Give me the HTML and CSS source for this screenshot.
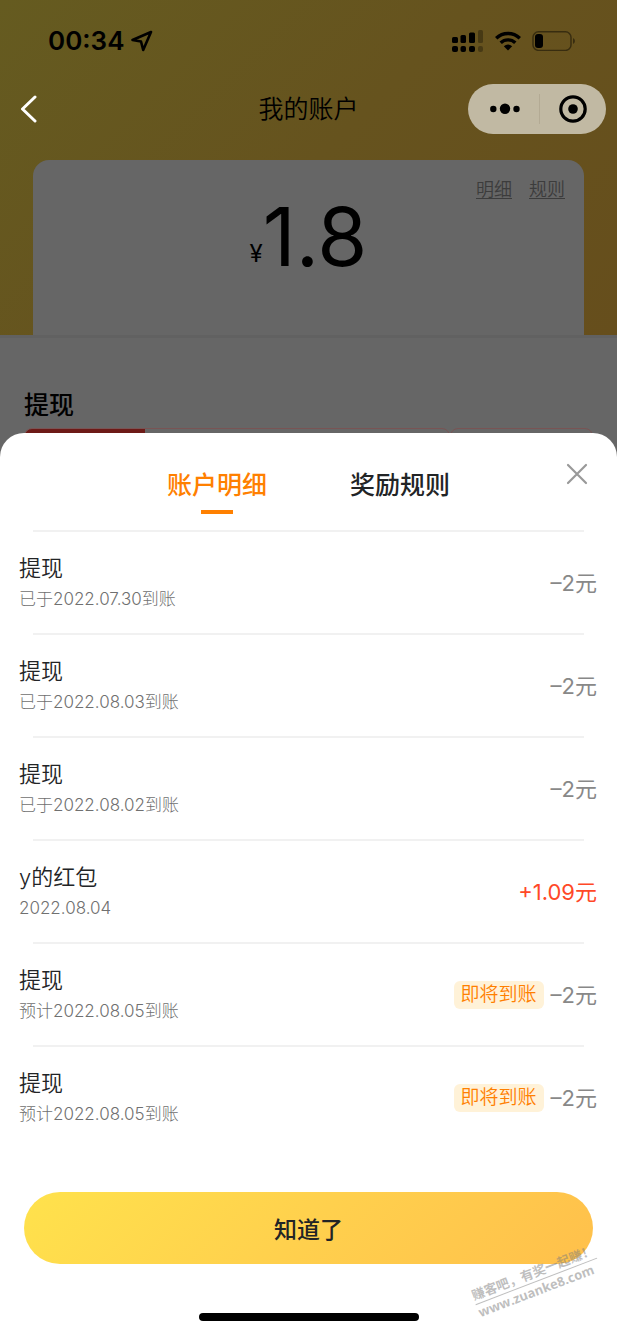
FILE: index.html
```html
<!DOCTYPE html>
<html lang="zh-CN">
<head>
<meta charset="utf-8">
<meta name="viewport" content="width=device-width, initial-scale=1">
<title>我的账户</title>
<link rel="stylesheet" href="styles.css">
</head>
<body>
<div class="page">
  <div class="account">
    <header class="hero">
      <div class="status">
        <div class="status-left">
          <span>00:34</span>
          <svg width="22" height="22" viewBox="0 0 22 22" fill="none" stroke="currentColor" stroke-width="2.6" stroke-linejoin="round"><path d="M20 2 1.500 10 10 11.500 12.200 20Z"/></svg>
        </div>
        <div class="status-right">
          <svg width="32" height="22" viewBox="0 0 32 22" fill="currentColor">
            <rect x="0" y="7" width="6" height="6" rx="1.500"/><rect x="8.500" y="5" width="5.500" height="8" rx="1.500"/><rect x="17" y="2.500" width="6" height="10.500" rx="1.500"/><rect x="26" y="0" width="5" height="13" rx="1.500" opacity=".3"/>
            <rect x="0" y="16" width="6" height="6" rx="2"/><rect x="8.500" y="16" width="5.500" height="6" rx="2"/><rect x="17" y="16" width="6" height="6" rx="2"/><rect x="26" y="16" width="5" height="6" rx="2" opacity=".3"/>
          </svg>
          <svg width="26" height="20" viewBox="0 0 26 20" fill="none" stroke="currentColor" stroke-width="3.400"><path d="M1.200 7.200a17 17 0 0 1 23.600 0M5.700 11.800a10.500 10.500 0 0 1 14.600 0"/><path d="M8.800 15.200a6.500 6.500 0 0 1 8.400 0L13 19.600Z" fill="currentColor" stroke="none"/></svg>
          <svg width="44" height="20" viewBox="0 0 44 20"><rect x="1" y=".8" width="38" height="18.600" rx="5.500" fill="none" stroke="currentColor" stroke-width="1.500" opacity=".45"/><rect x="3" y="3" width="8" height="14" rx="3" fill="currentColor"/><path d="M41 7q2 1 2 3t-2 3Z" fill="currentColor" opacity=".45"/></svg>
        </div>
      </div>
      <nav class="navbar">
        <button class="back" aria-label="返回"><svg width="18" height="28" viewBox="0 0 18 28" fill="none" stroke="currentColor" stroke-width="3" stroke-linecap="round" stroke-linejoin="round"><path d="M15 2 2.500 14 15 26"/></svg></button>
        <h1 class="nav-title">我的账户</h1>
        <div class="capsule">
          <button class="capsule-btn more" aria-label="更多"><svg width="30" height="12" viewBox="0 0 30 12" fill="currentColor"><circle cx="3.300" cy="6" r="3.200"/><circle cx="15" cy="5.800" r="5.200"/><circle cx="26.500" cy="6" r="3.200"/></svg></button>
          <button class="capsule-btn" aria-label="关闭小程序"><svg width="28" height="28" viewBox="0 0 28 28"><circle cx="14" cy="14" r="12.200" fill="none" stroke="currentColor" stroke-width="3.200"/><circle cx="14" cy="14" r="4.800" fill="currentColor"/></svg></button>
        </div>
      </nav>
      <section class="balance">
        <div class="links"><a href="#detail">明细</a><a href="#rules">规则</a></div>
        <p class="amount"><span class="yen">¥</span>1.8</p>
      </section>
    </header>
    <section class="withdraw">
      <h2>提现</h2>
      <div class="vouchers"><div class="voucher voucher-main"></div><div class="voucher voucher-side"></div></div>
    </section>
  </div>

  <main class="sheet">
    <div class="sheet-head">
      <div class="tabs" role="tablist">
        <button class="tab active" role="tab" aria-selected="true">账户明细</button>
        <button class="tab" role="tab" aria-selected="false">奖励规则</button>
      </div>
      <button class="close" aria-label="关闭"><svg width="22" height="22" viewBox="0 0 22 22" fill="none" stroke="currentColor" stroke-width="2.200" stroke-linecap="round"><path d="m2 2 18 18M20 2 2 20"/></svg></button>
    </div>
    <ul class="records">
      <li class="record"><div><p class="name">提现</p><p class="date">已于2022.07.30到账</p></div><span class="sum">–2元</span></li>
      <li class="record"><div><p class="name">提现</p><p class="date">已于2022.08.03到账</p></div><span class="sum">–2元</span></li>
      <li class="record"><div><p class="name">提现</p><p class="date">已于2022.08.02到账</p></div><span class="sum">–2元</span></li>
      <li class="record"><div><p class="name">y的红包</p><p class="date">2022.08.04</p></div><span class="sum income">+1.09元</span></li>
      <li class="record"><div><p class="name">提现</p><p class="date">预计2022.08.05到账</p></div><span class="tag">即将到账</span><span class="sum">–2元</span></li>
      <li class="record"><div><p class="name">提现</p><p class="date">预计2022.08.05到账</p></div><span class="tag">即将到账</span><span class="sum">–2元</span></li>
    </ul>
    <button class="confirm">知道了</button>
    <div class="home-bar"></div>
    <div class="watermark"><span class="slogan">赚客吧，有奖一起赚！</span><span class="site">www.zuanke8.com</span></div>
  </main>
</div>
</body>
</html>
```
FILE: styles.css
```css
* { box-sizing: border-box; }
body, h1, h2, p, ul { margin: 0; padding: 0; }
body {
  font-family: Inter, "Noto Sans CJK SC", sans-serif;
  color: #222426;
  background: #fff;
}
button { border: 0; padding: 0; background: none; color: inherit; font: inherit; cursor: pointer; }
svg { display: block; }
.page { min-height: 100vh; display: flex; flex-direction: column; }

.account { background: #666; color: #000; }
.hero { background: linear-gradient(135deg, #655b20 0%, #66531e 50%, #664e1c 100%); padding-top: 24px; }
.status { display: flex; justify-content: space-between; align-items: center; height: 34px; padding: 0 41px 0 48px; }
.status-left { display: flex; align-items: center; gap: 7px; font-size: 26px; font-weight: 600; line-height: 34px; }
.status-right { display: flex; align-items: center; gap: 11px; }
.navbar { display: grid; grid-template-columns: 1fr auto 1fr; align-items: center; margin-top: 26px; padding: 0 11px; }
.back { justify-self: start; margin-left: 9px; color: #fff; }
.nav-title { font-size: 25px; line-height: 36px; font-weight: 350; }
.capsule { justify-self: end; display: flex; align-items: center; width: 138px; height: 50px; border-radius: 25px; background: #c1b9a3; }
.capsule-btn { flex: 1; height: 30px; display: flex; align-items: center; justify-content: center; }
.capsule-btn + .capsule-btn { border-left: 1px solid #b3aa94; }
.more { padding-left: 4px; }
.balance { margin: 26px 33px 0; height: 175px; padding: 16px 19px 0; border-radius: 16px 16px 0 0; background: #666; }
.links { display: flex; justify-content: flex-end; gap: 17px; font-size: 18px; line-height: 28px; font-weight: 350; }
.links a { color: #3c3c3c; text-decoration: underline; text-underline-offset: 2px; }
.amount { font-size: 81px; line-height: 66px; text-align: center; }
.yen { font-size: 24px; vertical-align: 4px; line-height: 24px; }
.withdraw { border-top: 3px solid #616161; padding: 49px 24px 0; }
.withdraw h2 { font-size: 25px; line-height: 36px; font-weight: 500; }
.vouchers { display: flex; margin-top: 5px; height: 30px; }
.voucher { border: 1px solid #795454; border-radius: 8px; }
.voucher-main { flex: 3; background: linear-gradient(#6d1a17, #6d1a17) 0 0 / 120px 100% no-repeat; }
.voucher-side { flex: 1; }

.sheet { position: relative; flex: 1; display: flex; flex-direction: column; margin-top: -25px; border-radius: 24px 24px 0 0; background: #fff; }
.sheet-head { position: relative; display: flex; justify-content: center; height: 97px; padding-top: 34px; }
.tabs { display: flex; gap: 83px; }
.tab { display: flex; flex-direction: column; align-items: center; align-self: flex-start; font-size: 25px; line-height: 36px; font-weight: 500; }
.tab.active { color: #ff8000; }
.tab.active::after { content: ""; width: 32px; height: 4px; margin-top: 7px; background: currentColor; }
.close { position: absolute; top: 30px; right: 29px; color: #999; }
.records { list-style: none; }
.record { display: flex; align-items: center; height: 103px; padding: 2px 20px 0 19px; background: linear-gradient(#f1f1f1, #f1f1f1) center top / calc(100% - 66px) 2px no-repeat; }
.record > div { flex: 1; }
.name { font-size: 22px; line-height: 32px; font-weight: 350; }
.date { font-size: 17px; line-height: 30px; color: #707070; font-weight: 300; }
.sum { font-size: 22px; line-height: 32px; color: #888; }
.income { color: #ff4827; }
.tag { margin-right: 7px; padding: 0 7px; border-radius: 6px; background: #fff2d8; color: #ff8000; font-size: 19px; line-height: 28px; font-weight: 350; }
.confirm { margin: 44px 24px 0; height: 72px; border-radius: 36px; background: linear-gradient(135deg, #ffe24c, #ffd04d 50%, #ffc04b); font-size: 23px; font-weight: 500; }
.home-bar { align-self: center; width: 220px; height: 8px; margin: 49px 0 13px; border-radius: 4px; background: #000; }
.watermark { position: absolute; right: 16px; bottom: 36px; display: flex; flex-direction: column; transform: rotate(-21deg); color: rgba(125, 125, 125, .5); font-weight: 700; pointer-events: none; }
.slogan { border-bottom: 1px solid currentColor; font-size: 13px; line-height: 18px; }
.site { font-family: "Open Sans", sans-serif; font-size: 13px; line-height: 16px; }
```
